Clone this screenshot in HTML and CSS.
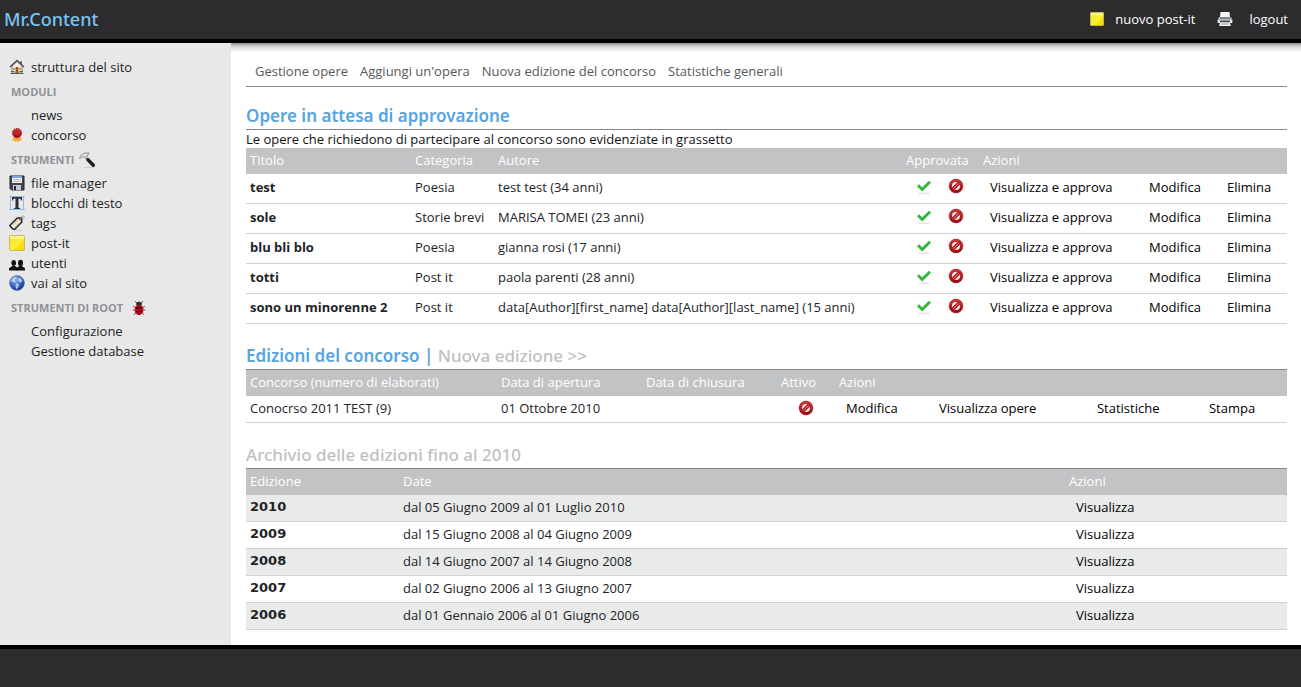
FILE: index.html
```html
<!DOCTYPE html>
<html lang="it">
<head>
<meta charset="utf-8">
<title>Mr.Content</title>
<meta name="viewport" content="width=device-width, initial-scale=1">
<link rel="stylesheet" href="styles.css">
</head>
<body>
<svg class="sprite" width="0" height="0" aria-hidden="true">
  <defs>
    <linearGradient id="gold" x1="0" y1="0" x2="1" y2="1"><stop offset="0" stop-color="#f3e12b"/><stop offset=".55" stop-color="#f9f036"/><stop offset="1" stop-color="#e9c000"/></linearGradient>
    <linearGradient id="red" x1="0" y1="0" x2="0" y2="1"><stop offset="0" stop-color="#d13a3a"/><stop offset="1" stop-color="#96080c"/></linearGradient>
    <radialGradient id="sea" cx=".4" cy=".3" r=".7"><stop offset="0" stop-color="#8fb4ee"/><stop offset=".6" stop-color="#3866c0"/><stop offset="1" stop-color="#16307e"/></radialGradient>
  </defs>
  <symbol id="i-note" viewBox="0 0 16 16">
    <rect x=".5" y=".5" width="15" height="15" rx="1" fill="url(#gold)" stroke="#cdbb55"/>
    <path d="M1 1h14v3H1z" fill="#fbf7a0" opacity=".75"/><path d="M4 15L15 6v9z" fill="#ffe000" opacity=".5"/>
  </symbol>
  <symbol id="i-print" viewBox="0 0 16 16">
    <path d="M3.500 1h9l.5 6H3z" fill="#f8f8f8"/><path d="M2 6h12l1.500 3v3H.500V9z" fill="#aeb1b6"/><path d="M3 6.500h10v1H3z" fill="#55585d"/><path d="M1 9h14v3H1z" fill="#e4e5e8"/><path d="M3 9.500h10v2H3z" fill="#454850"/><path d="M3 11.500h10l.8 3.500H2.200z" fill="#f5f5f5"/><path d="M4 13h8" stroke="#9a9ca1"/>
  </symbol>
  <symbol id="i-home" viewBox="0 0 16 16">
    <path d="M3 7l5-4.500L13 7v7H3z" fill="#f2efe4" stroke="#85857c"/><path d="M11 2h2v4l-2-2z" fill="#777"/>
    <path d="M1 8l7-6.500L15 8" fill="none" stroke="#4c4d49" stroke-width="1.400"/><rect x="6.500" y="8" width="3" height="6" fill="#a9561a"/><path d="M4 9h1.500v2H4zM10.500 9H12v2h-1.500z" fill="#b78339"/><path d="M1.500 14.500h13M2 12.500h3.500M10.500 12.500H14" stroke="#556144"/>
  </symbol>
  <symbol id="i-award" viewBox="0 0 16 16">
    <path d="M5 8L3.500 14l2-.8L7 15.500l1-3 1.200 3 1.300-2.300 2 .6L11 8z" fill="#f39a17"/><path d="M6 9v5M10 9v4" stroke="#fbc64a"/>
    <circle cx="8" cy="6" r="4.600" fill="url(#red)" stroke="#a3161a" stroke-dasharray="1.500 1"/><circle cx="8" cy="5.600" r="2.600" fill="#c62628"/>
  </symbol>
  <symbol id="i-hammer" viewBox="0 0 16 16">
    <path d="M5 15.500h10" stroke="#c4c4c4" opacity=".7"/><path d="M6.500 5.500l2.500 2.500" stroke="#b0b2b4" stroke-width="2.200"/><path d="M9 7.800l5.300 5.400" stroke="#1d1e20" stroke-width="3.400" stroke-linecap="round"/>
    <path d="M.6 6.500C1 3.500 3 1.500 5.500 1.200L9.600.8l.2 1.500L8 3.200l.3 2-1.800 1.300-1.600-2.300z" fill="#dcdedf" stroke="#73787c" stroke-width=".7"/>
  </symbol>
  <symbol id="i-disk" viewBox="0 0 16 16">
    <path d="M1 1h14v14H2.500L1 13.500z" fill="#40454d" stroke="#24272c"/><rect x="3" y="1" width="10" height="7" fill="#f5f7fa"/><path d="M3 2h10" stroke="#7ea7d9" stroke-width="2"/><path d="M4 4.500h8M4 6.500h8" stroke="#aeb5bd"/><rect x="4" y="10" width="8" height="5" fill="#c6cbd0"/><rect x="5" y="11" width="2" height="4" fill="#25282c"/>
  </symbol>
  <symbol id="i-text" viewBox="0 0 16 16">
    <path d="M1.500 1v14M14.500 1v14M0 1.500h16M0 14.500h16" stroke="#95b8e6"/><path d="M3 2h10v3.500h-.8C11.800 4 11.200 3.500 9.500 3.500v8.500c0 1 .3 1.200 1.800 1.300v.7H4.700v-.7c1.500-.1 1.800-.3 1.800-1.300V3.500C4.800 3.500 4.200 4 3.800 5.500H3z" fill="#2a2d31"/>
  </symbol>
  <symbol id="i-tag" viewBox="0 0 16 16">
    <path d="M4 15.200h9" stroke="#c2c2c2"/><path d="M.8 10.500L8 3.300l4.600-.5.200 4.200-7 7.200-2.200-.4z" fill="#f6f4f0" stroke="#222" stroke-width="1.500" stroke-linejoin="round"/><path d="M4 10l5-5M6 12l4.500-4.500" stroke="#e9b98a" stroke-width="1.200"/><circle cx="11" cy="4.600" r="1" fill="#555"/><path d="M11.300 4.300C12 1.500 15 0 15.300 1.500 15.500 3 14 3.500 12.500 4" fill="none" stroke="#999" stroke-width=".8"/>
  </symbol>
  <symbol id="i-users" viewBox="0 0 16 16">
    <g fill="#101113"><ellipse cx="4.700" cy="8" rx="2.300" ry="3"/><path d="M0 15.500v-2c0-1 3-1.700 3.500-2.500h2.500c.5.800 3 1.500 3 2.500v2z"/><ellipse cx="11.500" cy="8" rx="2.500" ry="3.200"/><path d="M7.500 15.500v-2c0-1 2.300-1.700 2.800-2.500h2.400c.5.800 3.300 1.500 3.300 2.500v2z"/></g>
  </symbol>
  <symbol id="i-globe" viewBox="0 0 16 16">
    <circle cx="8" cy="8" r="7.400" fill="url(#sea)" stroke="#5273b5" stroke-width=".7"/><path d="M3 4c2-2.500 4-2.500 5-2L7 4 5.500 4.500 6.500 7l-2 .5L2 6zM9 3l3 .5 1.500 3-2.500 1-2-2zM7 8l3 1.500-.5 2.500-2 2.500-1-3z" fill="#c7dafa" opacity=".8"/>
  </symbol>
  <symbol id="i-bug" viewBox="0 0 14 16">
    <path d="M3 1l2.500 3M11 1L8.500 4M1 6.500l3 1M13 6.500l-3 1M.8 10H4M13.200 10H10M2 15l2-3M12 15l-2-3" stroke="#626262"/><ellipse cx="7" cy="4" rx="2.800" ry="2.300" fill="#29292b"/><ellipse cx="7" cy="9.800" rx="4.500" ry="5.300" fill="#cc1020"/><path d="M7 5v10" stroke="#4b0808"/><g fill="#260507"><circle cx="5" cy="8" r="1"/><circle cx="9" cy="8" r="1"/><circle cx="4.900" cy="11.500" r="1"/><circle cx="9.100" cy="11.500" r="1"/></g>
  </symbol>
  <symbol id="i-check" viewBox="0 0 16 16">
    <path d="M3 15.200h10" stroke="#d9d9d9" stroke-linecap="round"/><path d="M2 7.300l4.200 4.200L14 3.800" fill="none" stroke="#2fb83c" stroke-width="2.900"/>
  </symbol>
  <symbol id="i-ban" viewBox="0 0 16 16">
    <circle cx="8" cy="8" r="6.900" fill="url(#red)" stroke="#8f1014" stroke-width=".6"/><circle cx="8" cy="8" r="4" fill="#fbeeee"/><path d="M4.500 11.500l7-7" stroke="#b61c20" stroke-width="3.600"/><path d="M5.300 10.700l5.400-5.400" stroke="#e9a3a3" stroke-width=".8"/>
  </symbol>
</svg>

<header class="topbar">
  <a class="logo" href="#">Mr.Content</a>
  <nav class="session">
    <a class="session-link" href="#"><svg class="icon-small"><use href="#i-note"/></svg>nuovo post-it</a>
    <a class="session-print" href="#" aria-label="Stampa"><svg class="icon"><use href="#i-print"/></svg></a>
    <a class="session-link" href="#">logout</a>
  </nav>
</header>

<div class="layout">
  <nav class="sidebar">
    <a class="side-link" href="#"><svg class="icon"><use href="#i-home"/></svg>struttura del sito</a>
    <h3 class="side-title">MODULI</h3>
    <a class="side-link side-plain" href="#">news</a>
    <a class="side-link" href="#"><svg class="icon"><use href="#i-award"/></svg>concorso</a>
    <h3 class="side-title">STRUMENTI<svg class="icon"><use href="#i-hammer"/></svg></h3>
    <a class="side-link" href="#"><svg class="icon"><use href="#i-disk"/></svg>file manager</a>
    <a class="side-link" href="#"><svg class="icon"><use href="#i-text"/></svg>blocchi di testo</a>
    <a class="side-link" href="#"><svg class="icon"><use href="#i-tag"/></svg>tags</a>
    <a class="side-link" href="#"><svg class="icon"><use href="#i-note"/></svg>post-it</a>
    <a class="side-link" href="#"><svg class="icon"><use href="#i-users"/></svg>utenti</a>
    <a class="side-link" href="#"><svg class="icon"><use href="#i-globe"/></svg>vai al sito</a>
    <h3 class="side-title side-root">STRUMENTI DI ROOT<svg class="icon"><use href="#i-bug"/></svg></h3>
    <a class="side-link side-plain" href="#">Configurazione</a>
    <a class="side-link side-plain" href="#">Gestione database</a>
  </nav>

  <main class="content">
    <nav class="tabs">
      <a href="#">Gestione opere</a>
      <a href="#">Aggiungi un'opera</a>
      <a href="#">Nuova edizione del concorso</a>
      <a href="#">Statistiche generali</a>
    </nav>

    <section>
      <h2 class="title">Opere in attesa di approvazione</h2>
      <p class="hint">Le opere che richiedono di partecipare al concorso sono evidenziate in grassetto</p>
      <table class="grid works">
        <colgroup><col class="w-title"><col class="w-category"><col><col class="w-approved"><col class="w-view"><col class="w-edit"><col class="w-delete"></colgroup>
        <thead><tr><th>Titolo</th><th>Categoria</th><th>Autore</th><th>Approvata</th><th colspan="3">Azioni</th></tr></thead>
        <tbody>
          <tr><td class="strong">test</td><td>Poesia</td><td>test test (34 anni)</td><td><div class="choices"><button aria-label="Approva"><svg class="icon"><use href="#i-check"/></svg></button><button aria-label="Rifiuta"><svg class="icon"><use href="#i-ban"/></svg></button></div></td><td class="action"><a href="#">Visualizza e approva</a></td><td class="action"><a href="#">Modifica</a></td><td class="action"><a href="#">Elimina</a></td></tr>
          <tr><td class="strong">sole</td><td>Storie brevi</td><td>MARISA TOMEI (23 anni)</td><td><div class="choices"><button aria-label="Approva"><svg class="icon"><use href="#i-check"/></svg></button><button aria-label="Rifiuta"><svg class="icon"><use href="#i-ban"/></svg></button></div></td><td class="action"><a href="#">Visualizza e approva</a></td><td class="action"><a href="#">Modifica</a></td><td class="action"><a href="#">Elimina</a></td></tr>
          <tr><td class="strong">blu bli blo</td><td>Poesia</td><td>gianna rosi (17 anni)</td><td><div class="choices"><button aria-label="Approva"><svg class="icon"><use href="#i-check"/></svg></button><button aria-label="Rifiuta"><svg class="icon"><use href="#i-ban"/></svg></button></div></td><td class="action"><a href="#">Visualizza e approva</a></td><td class="action"><a href="#">Modifica</a></td><td class="action"><a href="#">Elimina</a></td></tr>
          <tr><td class="strong">totti</td><td>Post it</td><td>paola parenti (28 anni)</td><td><div class="choices"><button aria-label="Approva"><svg class="icon"><use href="#i-check"/></svg></button><button aria-label="Rifiuta"><svg class="icon"><use href="#i-ban"/></svg></button></div></td><td class="action"><a href="#">Visualizza e approva</a></td><td class="action"><a href="#">Modifica</a></td><td class="action"><a href="#">Elimina</a></td></tr>
          <tr><td class="strong">sono un minorenne 2</td><td>Post it</td><td>data[Author][first_name] data[Author][last_name] (15 anni)</td><td><div class="choices"><button aria-label="Approva"><svg class="icon"><use href="#i-check"/></svg></button><button aria-label="Rifiuta"><svg class="icon"><use href="#i-ban"/></svg></button></div></td><td class="action"><a href="#">Visualizza e approva</a></td><td class="action"><a href="#">Modifica</a></td><td class="action"><a href="#">Elimina</a></td></tr>
        </tbody>
      </table>
    </section>

    <section>
      <h2 class="title">Edizioni del concorso | <a class="title-link" href="#">Nuova edizione &gt;&gt;</a></h2>
      <table class="grid">
        <colgroup><col><col class="w-open"><col class="w-close"><col class="w-active"><col class="w-modify"><col class="w-show"><col class="w-stats"><col class="w-print"></colgroup>
        <thead><tr><th>Concorso (numero di elaborati)</th><th>Data di apertura</th><th>Data di chiusura</th><th>Attivo</th><th colspan="4">Azioni</th></tr></thead>
        <tbody>
          <tr><td>Conocrso 2011 TEST (9)</td><td>01 Ottobre 2010</td><td></td><td><div class="choices"><button aria-label="Non attivo"><svg class="icon"><use href="#i-ban"/></svg></button></div></td><td class="action"><a href="#">Modifica</a></td><td class="action"><a href="#">Visualizza opere</a></td><td class="action"><a href="#">Statistiche</a></td><td class="action"><a href="#">Stampa</a></td></tr>
        </tbody>
      </table>
    </section>

    <section>
      <h2 class="title title-muted">Archivio delle edizioni fino al 2010</h2>
      <table class="grid striped">
        <colgroup><col class="w-year"><col><col class="w-archive"></colgroup>
        <thead><tr><th>Edizione</th><th>Date</th><th>Azioni</th></tr></thead>
        <tbody>
          <tr><td class="strong">2010</td><td>dal 05 Giugno 2009 al 01 Luglio 2010</td><td class="action"><a href="#">Visualizza</a></td></tr>
          <tr><td class="strong">2009</td><td>dal 15 Giugno 2008 al 04 Giugno 2009</td><td class="action"><a href="#">Visualizza</a></td></tr>
          <tr><td class="strong">2008</td><td>dal 14 Giugno 2007 al 14 Giugno 2008</td><td class="action"><a href="#">Visualizza</a></td></tr>
          <tr><td class="strong">2007</td><td>dal 02 Giugno 2006 al 13 Giugno 2007</td><td class="action"><a href="#">Visualizza</a></td></tr>
          <tr><td class="strong">2006</td><td>dal 01 Gennaio 2006 al 01 Giugno 2006</td><td class="action"><a href="#">Visualizza</a></td></tr>
        </tbody>
      </table>
    </section>
  </main>
</div>
<footer class="footer"></footer>
</body>
</html>
```
FILE: styles.css
```css
* { box-sizing: border-box; }

body {
  margin: 0;
  min-height: 100vh;
  display: flex;
  flex-direction: column;
  font: 13px/18px "Open Sans", "Noto Sans", sans-serif;
  color: #222326;
  background: #fff;
}

a { color: inherit; text-decoration: none; }
h2, h3, p { margin: 0; }
.sprite { position: absolute; }
.icon { width: 16px; height: 16px; flex: none; }
.icon-small { width: 14px; height: 14px; flex: none; }

.topbar {
  display: flex;
  align-items: center;
  justify-content: space-between;
  height: 43px;
  padding: 0 13px 2px 4px;
  background: #2c2c2e;
  border-bottom: 4px solid #000;
}
.logo { color: #79c4f2; font-family: "Noto Sans", sans-serif; font-size: 18px; font-weight: 500; line-height: 24px; }
.session { display: flex; align-items: center; color: #fff; gap: 22px; }
.session-link { display: flex; align-items: center; gap: 11px; }
.session-print { display: flex; margin-right: -6px; }

.layout { display: flex; flex: 1; }

.sidebar {
  width: 231px;
  flex: none;
  padding: 14px 9px;
  background: #e8e8e8;
}
.side-link {
  display: flex;
  align-items: center;
  gap: 6px;
  line-height: 20px;
}
.side-plain { padding-left: 22px; }
.side-title {
  display: flex;
  align-items: center;
  gap: 4px;
  padding: 2px 2px 0;
  color: #8f9297;
  font-size: 11px;
  line-height: 26px;
}
.side-root { gap: 8px; }

.content {
  flex: 1;
  min-width: 0;
  padding: 16px 14px 15px 15px;
  background: linear-gradient(#8f9092, #dcdcdc 4px, #fff 9px);
}
.tabs {
  display: flex;
  gap: 12px;
  padding: 3px 9px 6px;
  border-bottom: 1px solid #85868a;
  color: #57585b;
}

.title {
  padding: 17px 0 2px;
  border-bottom: 1px solid #85868a;
  color: #56a4e0;
  font-family: "Noto Sans", sans-serif;
  font-size: 17px;
  font-weight: 600;
  line-height: 23px;
}
.title-link, .title-muted { color: #c1c1c1; font-weight: 500; }
.hint { color: #111; }

section + section { margin-top: 3px; }

.grid {
  width: 100%;
  table-layout: fixed;
  border-collapse: separate;
  border-spacing: 0;
}
.grid th {
  height: 26px;
  padding: 0 4px 2px;
  background: #c2c3c5;
  color: #fff;
  font-weight: 400;
  text-align: left;
}
.grid td {
  height: 27px;
  padding: 0 0 2px 4px;
  border-bottom: 1px solid #d0d1d2;
  white-space: nowrap;
}
.works td { height: 30px; padding-bottom: 3px; }
.grid .action { padding-left: 11px; color: #000; }
.grid .strong { font-weight: 700; }
.striped .strong { font-family: "DejaVu Sans", sans-serif; }
.striped tbody tr:nth-child(odd) { background: #e9eaea; }

.choices { display: flex; justify-content: center; gap: 16px; padding-right: 4px; }
.works .choices { padding: 0 6px 2px 0; }
.choices button { display: flex; padding: 0; border: 0; background: none; }

.w-title { width: 165px; }
.w-category { width: 83px; }
.w-approved { width: 77px; }
.w-view { width: 159px; }
.w-edit { width: 78px; }
.w-delete { width: 71px; }
.w-open { width: 145px; }
.w-close { width: 135px; }
.w-active { width: 58px; }
.w-modify { width: 93px; }
.w-show { width: 158px; }
.w-stats { width: 112px; }
.w-print { width: 89px; }
.w-year { width: 153px; }
.w-archive { width: 222px; }

.footer { height: 42px; background: #2c2c2e; border-top: 4px solid #000; }
```
